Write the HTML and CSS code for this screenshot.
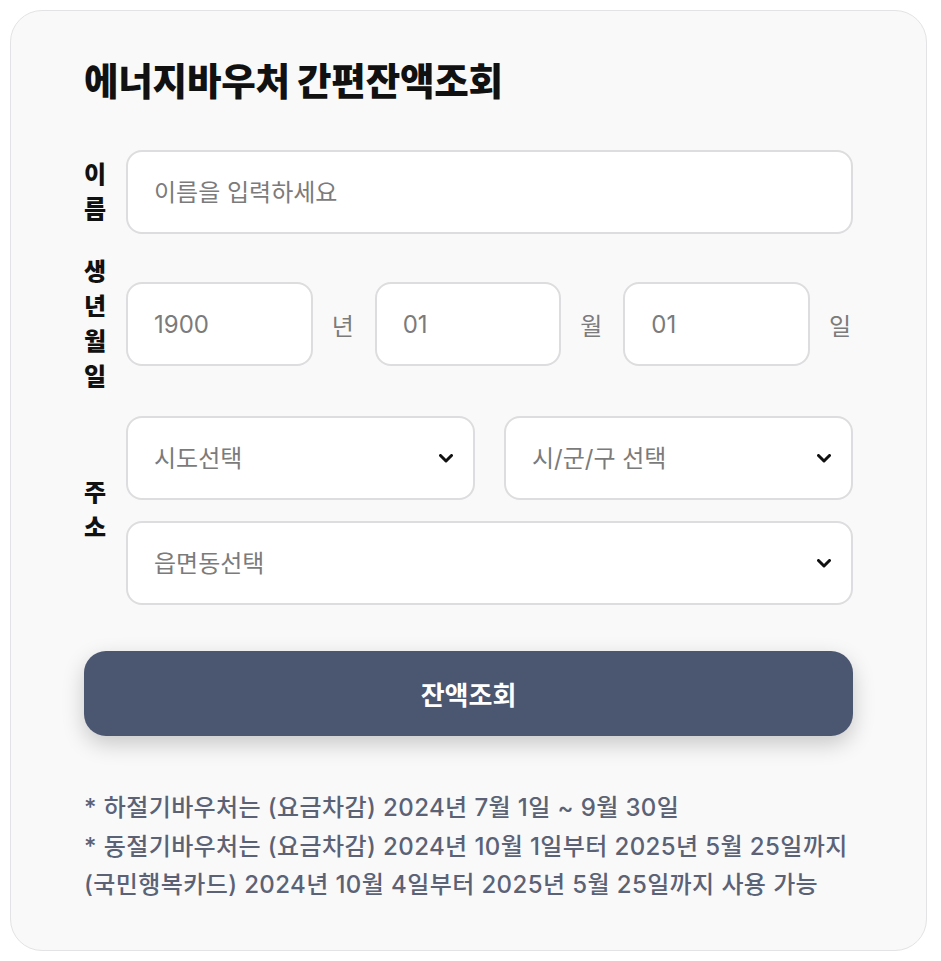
FILE: index.html
```html
<!DOCTYPE html>
<html lang="ko">
<head>
    <meta charset="UTF-8">
    <meta name="viewport" content="width=device-width, initial-scale=1.0">
    <title>에너지바우처 간편잔액조회</title>
    <link rel="stylesheet" href="styles.css">
</head>
<body>
    <div class="card">
        <h1 class="title">에너지바우처 간편잔액조회</h1>
        <form id="balance-form" class="balance-form">
            <div class="field">
                <label class="field-label" for="name">이름</label>
                <div class="field-body">
                    <input type="text" id="name" class="text-input" placeholder="이름을 입력하세요">
                </div>
            </div>

            <div class="field">
                <label class="field-label" for="birth-year">생년월일</label>
                <div class="field-body birth">
                    <input type="text" id="birth-year" class="text-input" placeholder="1900">
                    <span class="unit">년</span>
                    <input type="text" id="birth-month" class="text-input" placeholder="01">
                    <span class="unit">월</span>
                    <input type="text" id="birth-day" class="text-input" placeholder="01">
                    <span class="unit">일</span>
                </div>
            </div>

            <div class="field">
                <label class="field-label" for="sido">주소</label>
                <div class="field-body address">
                    <div class="select-wrap">
                        <select id="sido" class="select-input">
                            <option value="">시도선택</option>
                        </select>
                        <svg class="chevron" width="14" height="9" viewBox="0 0 14 9"><polyline points="1.5,1.5 7,7 12.5,1.5"/></svg>
                    </div>
                    <div class="select-wrap">
                        <select id="sigungu" class="select-input">
                            <option value="">시/군/구 선택</option>
                        </select>
                        <svg class="chevron" width="14" height="9" viewBox="0 0 14 9"><polyline points="1.5,1.5 7,7 12.5,1.5"/></svg>
                    </div>
                    <div class="select-wrap wide">
                        <select id="dong" class="select-input">
                            <option value="">읍면동선택</option>
                        </select>
                        <svg class="chevron" width="14" height="9" viewBox="0 0 14 9"><polyline points="1.5,1.5 7,7 12.5,1.5"/></svg>
                    </div>
                </div>
            </div>

            <button type="submit" class="submit-btn">잔액조회</button>
        </form>

        <div class="notice">
            <p>* 하절기바우처는 (요금차감) 2024년 7월 1일 ~ 9월 30일</p>
            <p>* 동절기바우처는 (요금차감) 2024년 10월 1일부터 2025년 5월 25일까지</p>
            <p>(국민행복카드) 2024년 10월 4일부터 2025년 5월 25일까지 사용 가능</p>
        </div>
    </div>

    <script>
        const form = document.getElementById('balance-form');

        form.addEventListener('submit', function(e) {
            e.preventDefault();
        });
    </script>
</body>
</html>
```

FILE: styles.css
```css
:root {
    --card-bg: #f9f9fa;
    --card-border: #e3e3e5;
    --input-border: #dddddf;
    --placeholder: #7b7b7b;
    --text-color: #111;
    --button-color: #4b5670;
    --notice-color: #5b6275;
}

* {
    box-sizing: border-box;
}

body {
    margin: 0;
    font-family: 'Inter', 'Noto Sans CJK KR', sans-serif;
    color: var(--text-color);
    background-color: #fff;
}

.card {
    width: 917px;
    margin: 10px 0 10px 10px;
    padding: 48px 73px 45px;
    background-color: var(--card-bg);
    border: 1px solid var(--card-border);
    border-radius: 32px;
}

.title {
    margin: 0 0 45px;
    font-size: 37.5px;
    line-height: 46px;
    font-weight: 900;
    letter-spacing: -0.2px;
}

.balance-form {
    display: flex;
    flex-direction: column;
    gap: 20px;
}

.field {
    display: flex;
    align-items: center;
    gap: 18px;
}

.field-label {
    flex: 0 0 24px;
    width: 24px;
    font-size: 24px;
    line-height: 35px;
    font-weight: 900;
    word-break: break-all;
}

.field-body {
    flex: 1;
}

.text-input,
.select-input {
    width: 100%;
    height: 84px;
    padding: 0 26px;
    font-family: inherit;
    font-size: 24px;
    color: var(--placeholder);
    background-color: #fff;
    border: 2px solid var(--input-border);
    border-radius: 16px;
    outline: none;
}

.text-input::placeholder {
    color: var(--placeholder);
}

.birth {
    display: flex;
    align-items: center;
    gap: 19px;
}

.birth .text-input {
    flex: 1;
    min-width: 0;
}

.unit {
    flex: 0 0 24px;
    font-size: 24px;
    color: var(--placeholder);
}

.address {
    display: grid;
    grid-template-columns: 1fr 1fr;
    column-gap: 29px;
    row-gap: 21px;
    padding-top: 2px;
}

.select-wrap {
    position: relative;
}

.select-wrap.wide {
    grid-column: 1 / -1;
}

.select-input {
    appearance: none;
    -webkit-appearance: none;
    cursor: pointer;
}

.chevron {
    position: absolute;
    right: 22px;
    top: 50%;
    margin-top: -4px;
    pointer-events: none;
}

.chevron polyline {
    fill: none;
    stroke: #111;
    stroke-width: 3;
    stroke-linecap: round;
    stroke-linejoin: round;
}

.submit-btn {
    height: 85px;
    margin-top: 26px;
    font-family: inherit;
    font-size: 26px;
    font-weight: 700;
    color: #fff;
    background-color: var(--button-color);
    border: none;
    border-radius: 22px;
    box-shadow: 0 8px 22px rgba(0, 0, 0, 0.2);
    cursor: pointer;
}

.notice {
    margin-top: 53px;
    color: var(--notice-color);
    font-size: 24px;
    font-weight: 500;
    line-height: 38.5px;
    letter-spacing: 0.4px;
    white-space: nowrap;
}

.notice p {
    margin: 0;
}
```
